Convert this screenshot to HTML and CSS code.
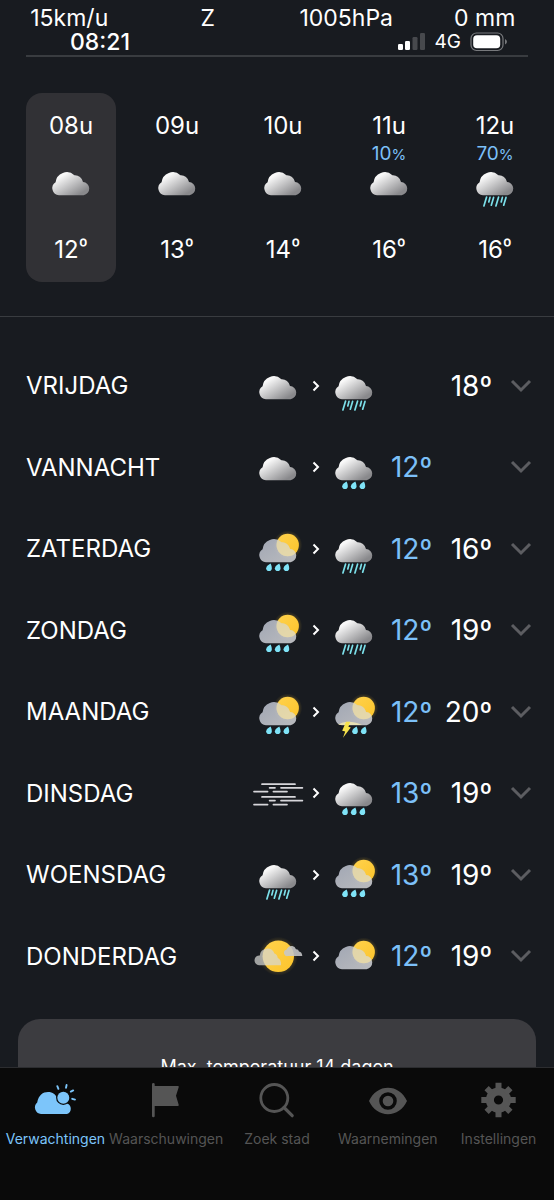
FILE: index.html
```html
<!DOCTYPE html>
<html lang="nl">
<head>
  <meta charset="UTF-8">
  <meta name="viewport" content="width=device-width, initial-scale=1">
  <title>Verwachtingen</title>
  <link rel="stylesheet" href="styles.css">
</head>
<body>

  <!-- Weather icons -->
  <svg class="defs" width="0" height="0" aria-hidden="true">
    <defs>
      <linearGradient id="grey" x1="0.1" y1="0.1" x2="0.85" y2="0.85">
        <stop offset="0.15" stop-color="#f8f8f8"/>
        <stop offset="1" stop-color="#89898c"/>
      </linearGradient>
      <linearGradient id="haze" x1="0" y1="0" x2="1" y2="1">
        <stop offset="0" stop-color="#b8becc"/>
        <stop offset="1" stop-color="#d4d5d8"/>
      </linearGradient>
      <linearGradient id="sunfill" x1="0" y1="0" x2="1" y2="1">
        <stop offset="0" stop-color="#ffd24d"/>
        <stop offset="1" stop-color="#fcc42b"/>
      </linearGradient>
      <radialGradient id="glow">
        <stop offset="0.6" stop-color="#fcc42b" stop-opacity="0.3"/>
        <stop offset="1" stop-color="#fcc42b" stop-opacity="0"/>
      </radialGradient>
      <path id="cloud-shape" d="M14 39.2A7 7 0 0 1 10.6 26.3A11.2 11.2 0 0 1 29.4 19.2A8.2 8.2 0 0 1 38 25.9A6.7 6.7 0 0 1 38.6 39.2Z"/>
      <path id="drop" d="M1.6-3.8C2.6-1.4 2.8-.4 2.8.8A2.8 2.8 0 0 1-2.8.8C-2.8-1-.4-2.6 1.6-3.8Z" fill="#7fe3f7"/>
      <g id="drops">
        <use href="#drop" x="17" y="44.4"/>
        <use href="#drop" x="25.7" y="44.4"/>
        <use href="#drop" x="34.4" y="44.4"/>
      </g>
      <g id="suncloud">
        <circle cx="35.7" cy="22" r="14.5" fill="url(#glow)"/>
        <circle cx="35.7" cy="22" r="11.2" fill="url(#sunfill)"/>
        <use href="#cloud-shape" fill="url(#haze)" fill-opacity="0.86"/>
        <clipPath id="cloudclip"><use href="#cloud-shape"/></clipPath>
        <circle cx="35.7" cy="22" r="11.2" fill="#f0dd9c" fill-opacity="0.6" clip-path="url(#cloudclip)"/>
      </g>
    </defs>
    <symbol id="cloud" viewBox="0 0 52 52"><use href="#cloud-shape" fill="url(#grey)"/></symbol>
    <symbol id="rain" viewBox="0 0 52 52">
      <use href="#cloud-shape" fill="url(#grey)"/>
      <path d="M17.6 41L14.9 50M21 41.4L19.8 46M24.6 41.4L22.3 49.2M29.6 41L26.9 50M33.4 41.4L32.2 46M37 41.4L34.7 49.2" stroke="#7ce0ea" stroke-width="1.7" stroke-linecap="round" fill="none"/>
    </symbol>
    <symbol id="showers" viewBox="0 0 52 52"><use href="#cloud-shape" fill="url(#grey)"/><use href="#drops"/></symbol>
    <symbol id="partly" viewBox="0 0 52 52"><use href="#suncloud"/></symbol>
    <symbol id="sunshowers" viewBox="0 0 52 52"><use href="#suncloud"/><use href="#drops"/></symbol>
    <symbol id="thunder" viewBox="0 0 52 52">
      <use href="#suncloud"/>
      <path d="M10 39Q19 32.5 34 39Z" fill="#fff3b0" fill-opacity="0.7"/>
      <path d="M18 35.8L22.2 35.8L20.4 40.8L22.8 41.4L15 51.8L17.2 45.4L14.2 44.8Z" fill="#f7e34c"/>
      <use href="#drop" x="27" y="44.4"/>
      <use href="#drop" x="35.7" y="44.4"/>
    </symbol>
    <symbol id="fog" viewBox="0 0 52 52">
      <path d="M10 17.2H43M17.6 20.8H23M29 20.8H50.4M2 24.6H15.6M21.4 24.6H35M10 29.9H43M17.6 33.6H23M29 33.6H50.4M2 37.6H15.6M21.4 37.6H35" stroke="#d6d6da" stroke-width="1.7" stroke-linecap="round" fill="none"/>
    </symbol>
    <symbol id="sunny" viewBox="0 0 52 52">
      <circle cx="26.3" cy="26.3" r="19.5" fill="url(#glow)"/>
      <circle cx="26.3" cy="26.3" r="15.7" fill="url(#sunfill)"/>
      <path d="M7 35.2A4.6 4.6 0 0 1 7.8 25.4A7.6 7.6 0 0 1 22.4 23.4Q25.2 24 25.8 28Q29.4 29.4 29 35.2Z" fill="#d5d7d3" fill-opacity="0.72"/>
      <path d="M36 26A3.2 3.2 0 0 1 34.4 19.8Q36.4 15.4 40.4 16.1Q43 16.4 44 19.2Q46.4 19 47 21.6Q50 22 50.3 26Z" fill="#c6c7c9" fill-opacity="0.88"/>
    </symbol>
  </svg>

  <div class="app">
    <main class="content">
      <header>
        <div class="metrics">
          <span>15km/u</span>
          <span>Z</span>
          <span>1005hPa</span>
          <span>0 mm</span>
        </div>
        <div class="status">
          <span class="time">08:21</span>
          <svg class="signal" width="28" height="18" viewBox="0 0 28 18">
            <rect x="0" y="11" width="5" height="6" rx="1.2" fill="#fff"/>
            <rect x="7" y="8" width="5" height="9" rx="1.2" fill="#fff"/>
            <rect x="14.5" y="4" width="5" height="13" rx="1.2" fill="#47494d"/>
            <rect x="22" y="0" width="5" height="17" rx="1.2" fill="#47494d"/>
          </svg>
          <span class="network">4G</span>
          <svg width="38" height="20" viewBox="0 0 38 20">
            <rect x="1" y="1" width="32" height="17.5" rx="5.5" fill="none" stroke="#77797c" stroke-width="1.2"/>
            <rect x="3.2" y="3.2" width="27" height="13" rx="3.8" fill="#fff"/>
            <path d="M35 7Q37 8 37 9.8T35 12.6Z" fill="#77797c"/>
          </svg>
        </div>
      </header>

      <section class="hours">
        <div class="hour now">
          <span class="label">08u</span><span class="chance"></span>
          <svg viewBox="0 14 52 38"><use href="#cloud" width="52" height="52"/></svg>
          <span class="temp">12<small>º</small></span>
        </div>
        <div class="hour">
          <span class="label">09u</span><span class="chance"></span>
          <svg viewBox="0 14 52 38"><use href="#cloud" width="52" height="52"/></svg>
          <span class="temp">13<small>º</small></span>
        </div>
        <div class="hour">
          <span class="label">10u</span><span class="chance"></span>
          <svg viewBox="0 14 52 38"><use href="#cloud" width="52" height="52"/></svg>
          <span class="temp">14<small>º</small></span>
        </div>
        <div class="hour">
          <span class="label">11u</span><span class="chance">10<small>%</small></span>
          <svg viewBox="0 14 52 38"><use href="#cloud" width="52" height="52"/></svg>
          <span class="temp">16<small>º</small></span>
        </div>
        <div class="hour">
          <span class="label">12u</span><span class="chance">70<small>%</small></span>
          <svg viewBox="0 14 52 38"><use href="#rain" width="52" height="52"/></svg>
          <span class="temp">16<small>º</small></span>
        </div>
      </section>

      <ul class="days">
        <li class="day">
          <span class="name">VRIJDAG</span>
          <svg class="icon"><use href="#cloud"/></svg>
          <svg class="arrow" viewBox="0 0 8 12"><path d="M1.5 1.5L6 6L1.5 10.5"/></svg>
          <svg class="icon"><use href="#rain"/></svg>
          <span class="low"></span><span class="high">18º</span>
          <button class="more" aria-label="Meer over vrijdag"><svg viewBox="0 0 22 14"><path d="M2 2L11 11L20 2"/></svg></button>
        </li>
        <li class="day">
          <span class="name">VANNACHT</span>
          <svg class="icon"><use href="#cloud"/></svg>
          <svg class="arrow" viewBox="0 0 8 12"><path d="M1.5 1.5L6 6L1.5 10.5"/></svg>
          <svg class="icon"><use href="#showers"/></svg>
          <span class="low">12º</span><span class="high"></span>
          <button class="more" aria-label="Meer over vannacht"><svg viewBox="0 0 22 14"><path d="M2 2L11 11L20 2"/></svg></button>
        </li>
        <li class="day">
          <span class="name">ZATERDAG</span>
          <svg class="icon"><use href="#sunshowers"/></svg>
          <svg class="arrow" viewBox="0 0 8 12"><path d="M1.5 1.5L6 6L1.5 10.5"/></svg>
          <svg class="icon"><use href="#rain"/></svg>
          <span class="low">12º</span><span class="high">16º</span>
          <button class="more" aria-label="Meer over zaterdag"><svg viewBox="0 0 22 14"><path d="M2 2L11 11L20 2"/></svg></button>
        </li>
        <li class="day">
          <span class="name">ZONDAG</span>
          <svg class="icon"><use href="#sunshowers"/></svg>
          <svg class="arrow" viewBox="0 0 8 12"><path d="M1.5 1.5L6 6L1.5 10.5"/></svg>
          <svg class="icon"><use href="#rain"/></svg>
          <span class="low">12º</span><span class="high">19º</span>
          <button class="more" aria-label="Meer over zondag"><svg viewBox="0 0 22 14"><path d="M2 2L11 11L20 2"/></svg></button>
        </li>
        <li class="day">
          <span class="name">MAANDAG</span>
          <svg class="icon"><use href="#sunshowers"/></svg>
          <svg class="arrow" viewBox="0 0 8 12"><path d="M1.5 1.5L6 6L1.5 10.5"/></svg>
          <svg class="icon"><use href="#thunder"/></svg>
          <span class="low">12º</span><span class="high">20º</span>
          <button class="more" aria-label="Meer over maandag"><svg viewBox="0 0 22 14"><path d="M2 2L11 11L20 2"/></svg></button>
        </li>
        <li class="day">
          <span class="name">DINSDAG</span>
          <svg class="icon"><use href="#fog"/></svg>
          <svg class="arrow" viewBox="0 0 8 12"><path d="M1.5 1.5L6 6L1.5 10.5"/></svg>
          <svg class="icon"><use href="#showers"/></svg>
          <span class="low">13º</span><span class="high">19º</span>
          <button class="more" aria-label="Meer over dinsdag"><svg viewBox="0 0 22 14"><path d="M2 2L11 11L20 2"/></svg></button>
        </li>
        <li class="day">
          <span class="name">WOENSDAG</span>
          <svg class="icon"><use href="#rain"/></svg>
          <svg class="arrow" viewBox="0 0 8 12"><path d="M1.5 1.5L6 6L1.5 10.5"/></svg>
          <svg class="icon"><use href="#sunshowers"/></svg>
          <span class="low">13º</span><span class="high">19º</span>
          <button class="more" aria-label="Meer over woensdag"><svg viewBox="0 0 22 14"><path d="M2 2L11 11L20 2"/></svg></button>
        </li>
        <li class="day">
          <span class="name">DONDERDAG</span>
          <svg class="icon"><use href="#sunny"/></svg>
          <svg class="arrow" viewBox="0 0 8 12"><path d="M1.5 1.5L6 6L1.5 10.5"/></svg>
          <svg class="icon"><use href="#partly"/></svg>
          <span class="low">12º</span><span class="high">19º</span>
          <button class="more" aria-label="Meer over donderdag"><svg viewBox="0 0 22 14"><path d="M2 2L11 11L20 2"/></svg></button>
        </li>
      </ul>

      <section class="card">
        <h2>Max. temperatuur 14 dagen</h2>
      </section>
    </main>

    <nav class="tabs">
      <a class="tab active" href="#verwachtingen">
        <svg viewBox="0 0 44 44">
          <path d="M8 35A6.5 6.5 0 0 1 4.2 23.6C5.5 16 10 13 15 13C20 13 22.5 15.5 24 19L34 24.4A5.6 5.6 0 0 1 34 35Z"/>
          <circle cx="30.3" cy="18.7" r="7.2" fill="#0a0a0a"/>
          <circle cx="30.3" cy="18.7" r="6"/>
          <path d="M24.3 7.2L25.4 9.8M33.6 6L33 8.8M37.8 12.6L40.2 11.4M39.2 19.8L42 20.6" stroke="currentColor" stroke-width="1.9" stroke-linecap="round"/>
        </svg>
        <span>Verwachtingen</span>
      </a>
      <a class="tab" href="#waarschuwingen">
        <svg viewBox="0 0 44 44"><path d="M8 5.3A1.3 1.3 0 0 1 10.7 5.3V7H33.8Q35.2 7 34.7 8.2L32 16.8L34.7 25.8Q35 27 33.8 27H10.7V37A1.3 1.3 0 0 1 8 37Z"/></svg>
        <span>Waarschuwingen</span>
      </a>
      <a class="tab" href="#zoek">
        <svg viewBox="0 0 44 44"><g fill="none" stroke="currentColor"><circle cx="19.3" cy="19" r="13.5" stroke-width="2.8"/><path d="M29 28.5L37.2 36.7" stroke-width="3.2" stroke-linecap="round"/></g></svg>
        <span>Zoek stad</span>
      </a>
      <a class="tab" href="#waarnemingen">
        <svg viewBox="0 0 44 44"><path fill-rule="evenodd" d="M3 22C7 13.5 14 8.8 22 8.8S37 13.5 41 22C37 30.5 30 35.2 22 35.2S7 30.5 3 22ZM22 13.2A8.8 8.8 0 1 0 22 30.8A8.8 8.8 0 1 0 22 13.2Z"/><circle cx="22" cy="22" r="5.3"/></svg>
        <span>Waarnemingen</span>
      </a>
      <a class="tab" href="#instellingen">
        <svg viewBox="0 0 44 44">
          <g stroke="currentColor" stroke-width="6">
            <circle cx="21.5" cy="21" r="8.6" fill="none" stroke-width="8"/>
            <path d="M21.5 3.8V38.2" stroke-dasharray="7 20.4"/>
            <path d="M4.3 21H38.7" stroke-dasharray="7 20.4"/>
            <path d="M9.6 9.1L33.4 32.9" stroke-dasharray="7 19.66"/>
            <path d="M33.4 9.1L9.6 32.9" stroke-dasharray="7 19.66"/>
          </g>
        </svg>
        <span>Instellingen</span>
      </a>
    </nav>
  </div>

</body>
</html>
```
FILE: styles.css
```css
* {
  box-sizing: border-box;
}

body {
  margin: 0;
  background: #181b20;
  color: #fff;
  font-family: Inter, "Liberation Sans", sans-serif;
}

.defs {
  position: absolute;
}

.app {
  height: 100vh;
  display: flex;
  flex-direction: column;
}

.content {
  flex: 1;
  min-height: 0;
  display: flex;
  flex-direction: column;
  overflow: hidden;
}

/* Top */
.metrics {
  display: grid;
  grid-template-columns: repeat(4, 1fr);
  padding-top: 6px;
  font-size: 23px;
  line-height: 24px;
  text-align: center;
}

.status {
  display: flex;
  align-items: center;
  margin: 0 26px;
  padding: 1px 20px 2px 44px;
  border-bottom: 2px solid #393c40;
  line-height: 22px;
}

.time {
  margin-right: auto;
  font-size: 23px;
  font-weight: 500;
}

.network {
  margin: 0 9px;
  font-size: 19px;
}

/* Hours */
.hours {
  display: grid;
  grid-template-columns: repeat(5, 1fr);
  gap: 16px;
  padding: 36px 14px 34px 26px;
  border-bottom: 1px solid #393c40;
}

.hour {
  display: flex;
  flex-direction: column;
  align-items: center;
  padding: 21px 0 22px;
  border-radius: 16px;
  font-size: 24px;
  line-height: 24px;
}

.now {
  background: #313135;
}

.hour svg {
  width: 52px;
  height: 38px;
}

.chance {
  height: 20px;
  margin: 6px 0;
  color: #7cc0f8;
  font-size: 19px;
  line-height: 20px;
}

.chance small {
  font-size: 15px;
}

.temp {
  height: 24px;
  margin-top: 28px;
}

.temp small {
  font-size: 20px;
  vertical-align: 5px;
  line-height: 1;
}

/* Days */
.days {
  flex: 1;
  display: flex;
  flex-direction: column;
  margin: 0;
  padding: 28px 4px 22px 26px;
  list-style: none;
}

.day {
  flex: 1;
  display: grid;
  grid-template-columns: 1fr 52px 24px 52px 52px 60px 58px;
  align-items: center;
  font-size: 28px;
}

.name {
  font-size: 24px;
}

.icon {
  width: 52px;
  height: 52px;
}

.arrow {
  width: 8px;
  height: 12px;
  justify-self: center;
  fill: none;
  stroke: #fff;
  stroke-width: 2;
}

.low,
.high {
  text-align: right;
}

.low {
  color: #7cc0f8;
}

.more {
  padding: 0;
  border: 0;
  background: none;
  line-height: 0;
}

.more svg {
  width: 22px;
  height: 14px;
  fill: none;
  stroke: #5c5d61;
  stroke-width: 3;
}

.card {
  flex: 0 0 48px;
  margin: 0 18px;
  padding-top: 36px;
  border-radius: 22px 22px 0 0;
  background: #3c3c40;
  text-align: center;
  overflow: hidden;
}

.card h2 {
  margin: 0;
  font-size: 18px;
  line-height: 24px;
  font-weight: 400;
}

/* Tabs */
.tabs {
  display: grid;
  grid-template-columns: repeat(5, 1fr);
  padding: 11px 0 51px;
  border-top: 1px solid #2c2d30;
  background: #0a0a0a;
}

.tab {
  display: flex;
  flex-direction: column;
  align-items: center;
  gap: 6px;
  min-width: 0;
  color: #555;
  font-size: 14px;
  line-height: 20px;
  text-decoration: none;
}

.tab svg {
  width: 44px;
  height: 44px;
  fill: currentColor;
}

.active {
  color: #7cc5fa;
}
```
